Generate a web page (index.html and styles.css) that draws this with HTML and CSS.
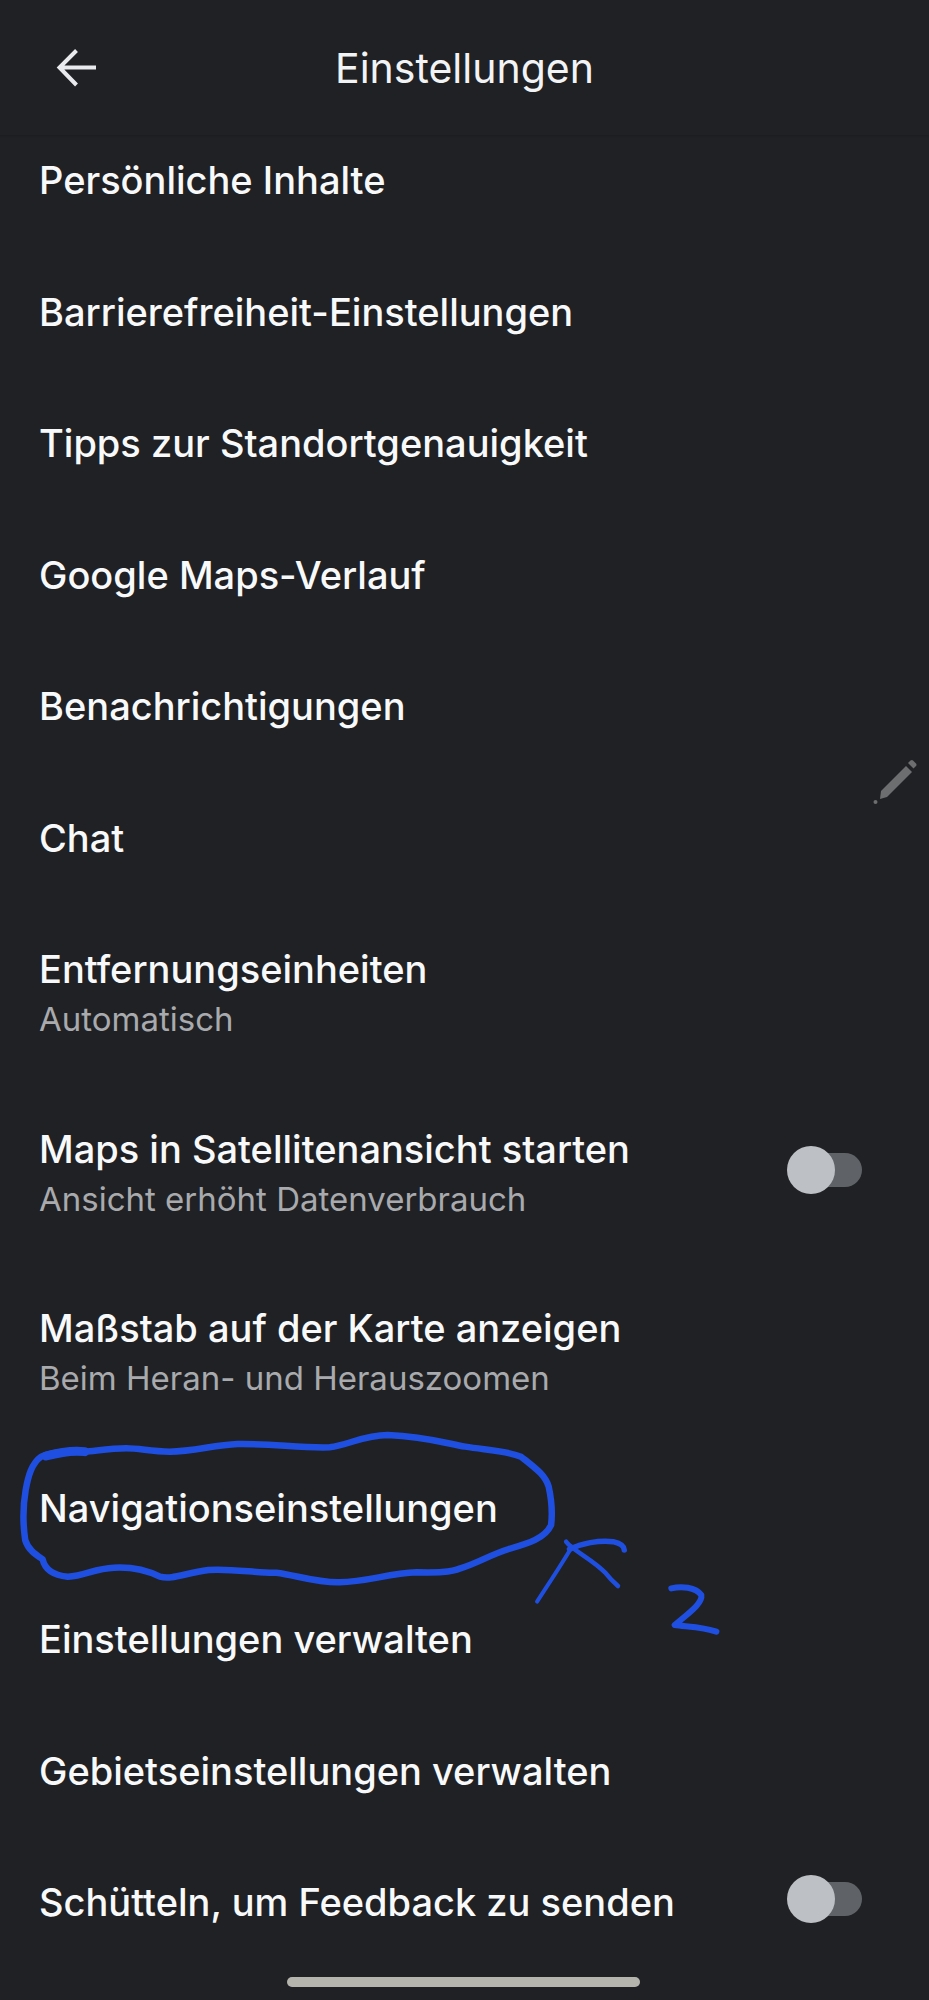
FILE: index.html
```html
<!DOCTYPE html>
<html>
<head>
    <title>Einstellungen</title>
    <link rel="stylesheet" href="styles.css">
</head>
<body>
    <div class="screen">
        <div class="header">
            <svg class="back-icon" viewBox="0 0 44 40" width="44" height="40">
                <path d="M40 19.5H4M20.5 2.5L3.5 19.5L20.5 37" fill="none" stroke="#e8eaed" stroke-width="4"/>
            </svg>
            <h1>Einstellungen</h1>
        </div>

        <div class="list">
            <div class="row"><div class="title">Persönliche Inhalte</div></div>
            <div class="row"><div class="title">Barrierefreiheit-Einstellungen</div></div>
            <div class="row"><div class="title">Tipps zur Standortgenauigkeit</div></div>
            <div class="row"><div class="title">Google Maps-Verlauf</div></div>
            <div class="row"><div class="title">Benachrichtigungen</div></div>
            <div class="row"><div class="title">Chat</div></div>
            <div class="row">
                <div>
                    <div class="title">Entfernungseinheiten</div>
                    <div class="sub">Automatisch</div>
                </div>
            </div>
            <div class="row">
                <div>
                    <div class="title">Maps in Satellitenansicht starten</div>
                    <div class="sub">Ansicht erhöht Datenverbrauch</div>
                </div>
                <div class="switch"><div class="knob"></div></div>
            </div>
            <div class="row">
                <div>
                    <div class="title">Maßstab auf der Karte anzeigen</div>
                    <div class="sub">Beim Heran- und Herauszoomen</div>
                </div>
            </div>
            <div class="row"><div class="title">Navigationseinstellungen</div></div>
            <div class="row"><div class="title">Einstellungen verwalten</div></div>
            <div class="row"><div class="title">Gebietseinstellungen verwalten</div></div>
            <div class="row">
                <div class="title">Schütteln, um Feedback zu senden</div>
                <div class="switch"><div class="knob"></div></div>
            </div>
        </div>

        <svg class="pencil" viewBox="0 0 48 48" width="48" height="48">
            <path d="M9 35L34 10L40 16L15 41L8 43Z" fill="#6d6e70"/>
            <path d="M36 7L38.5 4.5Q40 3.5 41 4.5L44 7.5Q45 8.5 44 10L41.500 12.500Z" fill="#6d6e70"/>
            <circle cx="3.500" cy="46" r="2" fill="#6d6e70"/>
        </svg>

        <!-- blue pen marks on top of the screenshot -->
        <svg class="scribble" viewBox="0 0 1568 780" preserveAspectRatio="none">
            <g fill="none" stroke="#1f4fe0" stroke-linecap="round" stroke-linejoin="round">
                <path vector-effect="non-scaling-stroke" stroke-width="6.500" d="M175 155C140 150 100 160 85 170C65 190 58 230 53 270C47 320 48 380 52 420C58 450 75 465 88 478C92 505 105 525 140 530C175 528 195 505 235 503C275 500 305 512 330 530C355 540 380 520 430 510C480 505 530 520 570 518C610 525 650 548 700 547C760 545 800 520 860 517C900 518 930 518 950 505C985 490 1010 465 1050 447C1090 430 1125 415 1137 375C1140 340 1138 300 1132 260C1125 225 1105 205 1075 170C1040 150 1000 150 960 140C920 130 880 110 800 105C750 105 720 135 680 142C620 145 560 130 490 132C440 135 400 155 350 155C310 155 290 145 260 145C230 145 200 152 175 155"/>
                <path vector-effect="non-scaling-stroke" stroke-width="9" d="M95 168C120 158 150 150 175 155"/>
                <path vector-effect="non-scaling-stroke" stroke-width="4" d="M1108 605C1130 555 1160 490 1180 440"/>
                <path vector-effect="non-scaling-stroke" stroke-width="4.500" d="M1168 425C1180 450 1225 480 1250 520C1258 535 1265 545 1275 558"/>
                <path vector-effect="non-scaling-stroke" stroke-width="5.500" d="M1175 448C1200 430 1235 420 1265 425C1280 430 1288 438 1288 450"/>
                <path vector-effect="non-scaling-stroke" stroke-width="6" d="M1385 565C1405 558 1435 560 1447 585C1450 610 1420 640 1392 675C1415 680 1450 680 1478 695"/>
            </g>
        </svg>

        <div class="home-bar"></div>
    </div>
</body>
</html>
```

FILE: styles.css
```css
* {
    box-sizing: border-box;
}

body {
    margin: 0;
    background-color: #202125;
    font-family: Inter, Roboto, sans-serif;
}

.screen {
    position: relative;
    width: 929px;
    height: 2000px;
    overflow: hidden;
    background-color: #202125;
}

.header {
    position: relative;
    z-index: 1;
    height: 135px;
    display: flex;
    align-items: center;
    justify-content: center;
    background-color: #202125;
    box-shadow: 0 1px 2px rgba(0, 0, 0, 0.15);
}

.back-icon {
    position: absolute;
    left: 56px;
    top: 48px;
}

h1 {
    margin: 0;
    font-size: 41px;
    font-weight: 400;
    color: #f1f3f4;
}

.list {
    margin-top: -21px;
}

.row {
    display: flex;
    align-items: center;
    justify-content: space-between;
    padding: 40px 67px 39.500px 39px;
}

.title {
    font-size: 38px;
    line-height: 52px;
    font-weight: 450;
    color: #f8f9fa;
}

.sub {
    font-size: 33px;
    line-height: 48px;
    color: #a8aaad;
}

.switch {
    position: relative;
    width: 72px;
    height: 34px;
    margin-bottom: 6px;
    border-radius: 17px;
    background-color: #5f6368;
}

.knob {
    position: absolute;
    left: -3px;
    top: -7px;
    width: 48px;
    height: 48px;
    border-radius: 50%;
    background-color: #bdc1c6;
}

.pencil {
    position: absolute;
    left: 872px;
    top: 756px;
}

.scribble {
    position: absolute;
    left: 0;
    top: 1400px;
    width: 760px;
    height: 260px;
}

.home-bar {
    position: absolute;
    left: 287px;
    top: 1977px;
    width: 353px;
    height: 10px;
    border-radius: 5px;
    background-color: #b5b5ae;
}
```
